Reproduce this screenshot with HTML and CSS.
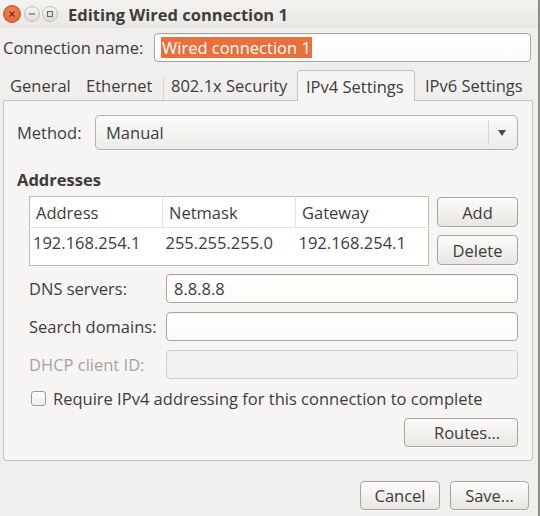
FILE: index.html
```html
<!DOCTYPE html>
<html>
<head>
<meta charset="utf-8">
<title>Editing Wired connection 1</title>
<link rel="stylesheet" href="styles.css">
</head>
<body>
<div class="window">
  <div class="titlebar">
    <div class="wbtn close"><svg width="8" height="8" viewBox="0 0 8 8"><path d="M1.5 1.5 L6.5 6.5 M6.5 1.5 L1.5 6.5" stroke="#7a2a12" stroke-width="1.4" fill="none"/></svg></div>
    <div class="wbtn min"><svg width="8" height="8" viewBox="0 0 8 8"><path d="M1 4 H7" stroke="#6a6a66" stroke-width="1.2"/></svg></div>
    <div class="wbtn max"><svg width="8" height="8" viewBox="0 0 8 8"><rect x="1.5" y="1.5" width="5" height="5" stroke="#6a6a66" stroke-width="1.1" fill="none"/></svg></div>
    <div class="title">Editing Wired connection 1</div>
  </div>

  <div class="content">
    <div class="conn-row">
      <label class="conn-label">Connection name:</label>
      <div class="entry conn-entry"><span class="sel">Wired connection 1</span></div>
    </div>

    <div class="notebook">
      <div class="tabs">
        <div class="tab t-general">General</div>
        <div class="tab t-ethernet">Ethernet</div>
        <div class="tab t-security">802.1x Security</div>
        <div class="tab t-ipv4 active">IPv4 Settings</div>
        <div class="tab t-ipv6">IPv6 Settings</div>
      </div>
      <div class="panel">
        <div class="method-row">
          <label class="method-label">Method:</label>
          <div class="combo">
            <span class="combo-text">Manual</span>
            <span class="combo-sep"></span>
            <span class="combo-arrow"></span>
          </div>
        </div>

        <div class="heading">Addresses</div>

        <div class="addr-block">
          <table class="addr-table">
            <thead>
              <tr><th class="c1">Address</th><th class="c2">Netmask</th><th class="c3">Gateway</th></tr>
            </thead>
            <tbody>
              <tr><td class="c1">192.168.254.1</td><td class="c2">255.255.255.0</td><td class="c3">192.168.254.1</td></tr>
            </tbody>
          </table>
          <div class="addr-buttons">
            <div class="button addr-btn">Add</div>
            <div class="button addr-btn">Delete</div>
          </div>
        </div>

        <div class="form">
          <div class="form-row">
            <label class="form-label">DNS servers:</label>
            <div class="entry form-entry">8.8.8.8</div>
          </div>
          <div class="form-row">
            <label class="form-label">Search domains:</label>
            <div class="entry form-entry"></div>
          </div>
          <div class="form-row">
            <label class="form-label disabled">DHCP client ID:</label>
            <div class="entry form-entry entry-disabled"></div>
          </div>
          <div class="check-row">
            <span class="checkbox"></span>
            <span class="check-text">Require IPv4 addressing for this connection to complete</span>
          </div>
          <div class="routes-row">
            <div class="button routes-btn">Routes…</div>
          </div>
        </div>
      </div>
    </div>

    <div class="actions">
      <div class="button act-btn cancel">Cancel</div>
      <div class="button act-btn save">Save...</div>
    </div>
  </div>
</div>
</body>
</html>
```

FILE: styles.css
```css
* { box-sizing: border-box; }

html, body {
  margin: 0;
  padding: 0;
}

body {
  width: 540px;
  height: 516px;
  background: #f0efee;
  font-family: "Open Sans", "Noto Sans", "DejaVu Sans", sans-serif;
  font-size: 16.5px;
  color: #3c3c3c;
  overflow: hidden;
}

.window {
  width: 540px;
  height: 516px;
  border-right: 2px solid #8d8b87;
}

/* title bar */
.titlebar {
  height: 28px;
  display: flex;
  align-items: center;
  padding-left: 3px;
  background: linear-gradient(#f4f3f1, #e9e7e3);
}

.wbtn {
  width: 16px;
  height: 16px;
  border-radius: 50%;
  display: flex;
  align-items: center;
  justify-content: center;
  margin-right: 2px;
}

.wbtn.close {
  width: 18px;
  height: 18px;
  margin-right: 3px;
  background: radial-gradient(circle at 50% 40%, #f58a5a, #e0582c);
  border: 1px solid #c9532c;
}

.wbtn.min, .wbtn.max {
  background: linear-gradient(#f7f6f4, #dedbd6);
  border: 1px solid #c4c0b9;
}

.title {
  margin-left: 8px;
  font-weight: 700;
  font-size: 16.5px;
  color: #3d3d3a;
}

/* content */
.content {
  padding: 0 7px 0 3px;
}

.conn-row {
  display: flex;
  align-items: center;
  margin-top: 5px;
  height: 29px;
}

.conn-label {
  width: 151px;
}

.entry {
  height: 29px;
  background: linear-gradient(#ffffff, #fbfbfa);
  border: 1px solid #aaa69f;
  border-radius: 4px;
  box-shadow: inset 0 1px 1px rgba(0,0,0,0.06);
  display: flex;
  align-items: center;
  padding-left: 6px;
}

.conn-entry {
  width: 377px;
}

.sel {
  background: #e8703c;
  color: #ffffff;
  line-height: 21px;
  padding: 0 1px;
}

/* notebook */
.notebook {
  margin-top: 8px;
  width: 530px;
}

.tabs {
  display: flex;
  height: 30px;
  align-items: flex-end;
}

.tab {
  height: 30px;
  display: flex;
  align-items: center;
  position: relative;
}

.t-general { width: 77px; padding-left: 7px; }
.t-ethernet { width: 84px; padding-left: 6px; }
.t-security { width: 133px; padding-left: 7px; }
.t-ipv4 { width: 118px; padding-left: 8px; }
.t-ipv6 { width: 118px; padding-left: 10px; }

.t-security::before {
  content: "";
  position: absolute;
  left: -1px;
  top: 8px;
  bottom: 0;
  border-left: 1px solid #d6d3ce;
}

.tab.active {
  border: 1px solid #c6c3bd;
  border-bottom: none;
  border-radius: 4px 4px 0 0;
  background: #f6f5f4;
  height: 31px;
  margin-bottom: -1px;
  z-index: 1;
}

.panel {
  height: 361px;
  border: 1px solid #c6c3bd;
  border-radius: 0 0 3px 3px;
  background: #f6f5f4;
  padding: 14px 14px 0 13px;
}

.method-row {
  display: flex;
  align-items: center;
  height: 35px;
}

.method-label {
  width: 78px;
}

.combo {
  flex: 1;
  height: 35px;
  border: 1px solid #b3afa8;
  border-radius: 5px;
  background: linear-gradient(#fbfbfa, #ecebe8);
  display: flex;
  align-items: center;
  padding-left: 10px;
}

.combo-text { flex: 1; }

.combo-sep {
  width: 1px;
  height: 25px;
  background: #d9d6d1;
  margin-right: 9px;
}

.combo-arrow {
  width: 0;
  height: 0;
  border-left: 4.5px solid transparent;
  border-right: 4.5px solid transparent;
  border-top: 6px solid #4a4a48;
  margin-right: 11px;
}

.heading {
  margin-top: 20px;
  font-weight: 700;
  line-height: 20px;
  height: 20px;
}

.addr-block {
  display: flex;
  margin-top: 6px;
  padding-left: 12px;
}

.addr-table {
  width: 400px;
  height: 70px;
  border: 1px solid #c0bdb7;
  border-collapse: collapse;
  background: #ffffff;
  table-layout: fixed;
}

.addr-table th {
  font-weight: 400;
  text-align: left;
  height: 31px;
  border-bottom: 1px solid #e3e1dd;
  border-right: 1px solid #e3e1dd;
  padding: 0 0 0 6px;
}

.addr-table th.c3 { border-right: none; }

.addr-table td {
  vertical-align: top;
  padding: 3px 0 0 3px;
}

.c1 { width: 133px; }
.c2 { width: 133px; }

.addr-buttons {
  margin-left: 8px;
  display: flex;
  flex-direction: column;
  gap: 8px;
  padding-top: 1px;
}

.button {
  height: 30px;
  border: 1px solid #a8a59e;
  border-radius: 4px;
  background: linear-gradient(#fcfcfb, #e8e6e2);
  box-shadow: 0 1px 0 rgba(255,255,255,0.7);
  display: flex;
  align-items: center;
  justify-content: center;
}

.addr-btn { width: 81px; }

.form {
  margin-top: 8px;
  padding-left: 12px;
}

.form-row {
  display: flex;
  align-items: center;
  margin-bottom: 9px;
}

.form-label {
  width: 137px;
}

.form-label.disabled { color: #a5a39f; }

.form-entry {
  flex: 1;
  padding-left: 7px;
}

.entry-disabled {
  background: #f3f2f1;
  border-color: #d1cec9;
  box-shadow: none;
}

.check-row {
  display: flex;
  align-items: center;
  height: 20px;
  margin-top: 3px;
}

.checkbox {
  width: 15px;
  height: 15px;
  border: 1px solid #9d9a93;
  border-radius: 3px;
  background: linear-gradient(#ffffff, #efeeec);
  margin-left: 2px;
  margin-right: 7px;
}

.routes-row {
  display: flex;
  justify-content: flex-end;
  margin-top: 10px;
}

.routes-btn { width: 114px; height: 29px; padding-left: 12px; }

.actions {
  display: flex;
  justify-content: flex-end;
  gap: 10px;
  margin-top: 20px;
  padding-right: 2px;
}

.act-btn { height: 29px; }
.cancel { width: 80px; }
.save { width: 79px; }
```
